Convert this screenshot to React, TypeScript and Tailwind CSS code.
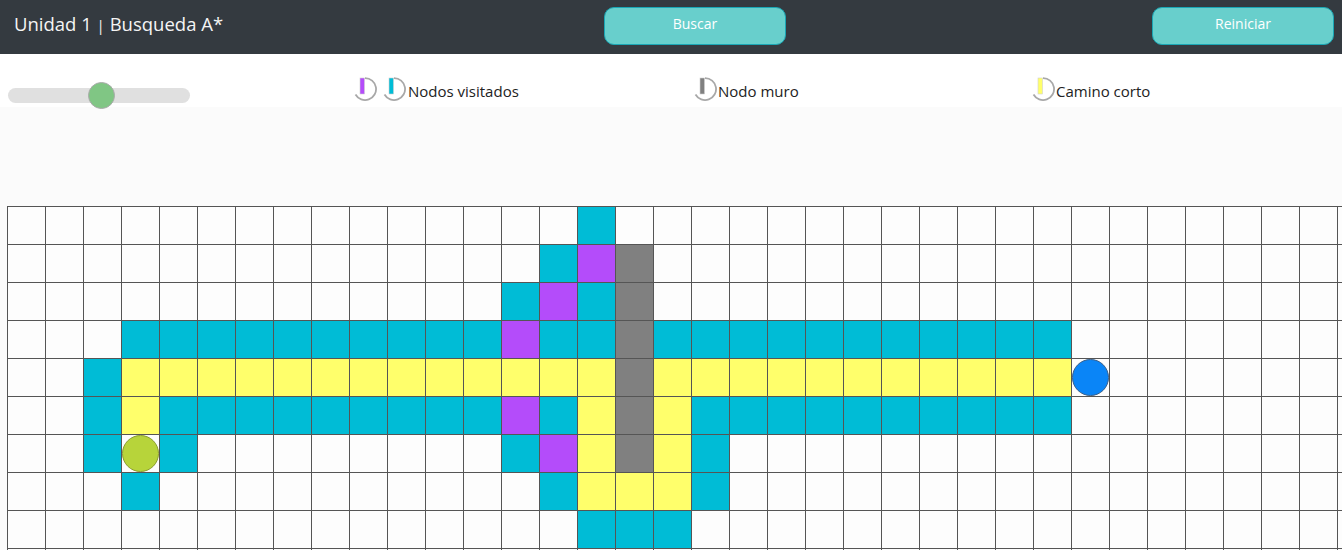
import React from 'react';

type Cell = '.' | 'c' | 'p' | 'w' | 'y' | 'S' | 'E';

const COLS = 36;
const ROWS = 10;

// [from, to, type] segments per row
const SEGMENTS: [number, number, Cell][][] = [
  [[15, 15, 'c']],
  [[14, 14, 'c'], [15, 15, 'p'], [16, 16, 'w']],
  [[13, 13, 'c'], [14, 14, 'p'], [15, 15, 'c'], [16, 16, 'w']],
  [[3, 12, 'c'], [13, 13, 'p'], [14, 15, 'c'], [16, 16, 'w'], [17, 27, 'c']],
  [[2, 2, 'c'], [3, 15, 'y'], [16, 16, 'w'], [17, 27, 'y'], [28, 28, 'E']],
  [[2, 2, 'c'], [3, 3, 'y'], [4, 12, 'c'], [13, 13, 'p'], [14, 14, 'c'], [15, 15, 'y'], [16, 16, 'w'], [17, 17, 'y'], [18, 27, 'c']],
  [[2, 2, 'c'], [3, 3, 'S'], [4, 4, 'c'], [13, 13, 'c'], [14, 14, 'p'], [15, 15, 'y'], [16, 16, 'w'], [17, 17, 'y'], [18, 18, 'c']],
  [[3, 3, 'c'], [14, 14, 'c'], [15, 17, 'y'], [18, 18, 'c']],
  [[15, 17, 'c']],
  [],
];

const buildGrid = (): Cell[][] =>
  SEGMENTS.slice(0, ROWS).map((segs) => {
    const row: Cell[] = Array(COLS).fill('.');
    segs.forEach(([a, b, t]) => {
      for (let i = a; i <= b; i++) row[i] = t;
    });
    return row;
  });

const CELL_BG: Record<Cell, string> = {
  '.': 'bg-[#fdfdfd]',
  c: 'bg-[#00bcd6]',
  p: 'bg-[#b44cfa]',
  w: 'bg-[#808080]',
  y: 'bg-[#ffff6b]',
  S: 'bg-[#fdfdfd]',
  E: 'bg-[#fdfdfd]',
};

const LegendGlyph: React.FC<{ color: string }> = ({ color }) => (
  <svg width="24" height="24" viewBox="0 0 24 24" className="shrink-0">
    <path d="M12 1.05 A11 11 0 1 1 2.5 17.5" fill="none" stroke="#a8a8a8" strokeWidth="1.8" />
    <rect x="7" y="1" width="4.5" height="16" fill={color} stroke="#d0d0d0" strokeWidth="0.6" />
  </svg>
);

export default function App() {
  const grid = buildGrid();
  return (
    <div className="w-[1342px] h-[550px] overflow-hidden bg-[#fbfbfb] font-['Open_Sans',sans-serif]">
      <header className="h-[54px] bg-[#343a40] flex items-start">
        <div className="w-[604px] pl-[14px] pt-[10px] text-[18.5px] text-[#f4f4f4]">
          Unidad 1 <span className="text-[15px]">|</span> Busqueda A*
        </div>
        <button className="mt-[7px] w-[182px] h-[38px] pb-[6px] rounded-[10px] bg-[#68cfcc] border border-[#1aa7b5] text-white text-[14px]">
          Buscar
        </button>
        <div className="flex-1" />
        <button className="mt-[7px] w-[182px] h-[38px] pb-[6px] mr-[8px] rounded-[10px] bg-[#68cfcc] border border-[#1aa7b5] text-white text-[14px]">
          Reiniciar
        </button>
      </header>

      <div className="h-[53px] bg-white flex items-start pt-[22px] text-[15px] text-[#222]">
        <div className="w-[353px] pl-[8px] pt-[12px]">
          <div className="relative w-[182px] h-[15px] rounded-full bg-[#e0e0e0]">
            <div className="absolute left-[80px] top-[-6px] w-[27px] h-[27px] rounded-full bg-[#80c684] border border-[#aaaaaa]" />
          </div>
        </div>
        <div className="w-[340px] flex items-center gap-[5px]">
          <LegendGlyph color="#b44cfa" />
          <LegendGlyph color="#00bcd6" />
          <span className="ml-[-3px] pt-[4px]">Nodos visitados</span>
        </div>
        <div className="w-[338px] flex items-center gap-[1px]">
          <LegendGlyph color="#808080" />
          <span className="pt-[4px]">Nodo muro</span>
        </div>
        <div className="flex items-center gap-[1px]">
          <LegendGlyph color="#ffff6b" />
          <span className="pt-[4px]">Camino corto</span>
        </div>
      </div>

      <div className="h-[99px]" />

      <div className="pl-[7px]">
        <div className="grid grid-cols-[repeat(36,38px)] w-max border-t border-l border-[#555]">
          {grid.map((row, r) =>
            row.map((cell, c) => (
              <div
                key={`${r}-${c}`}
                className={`w-[38px] h-[38px] border-r border-b border-[#555] flex items-center justify-center ${CELL_BG[cell]}`}
              >
                {cell === 'S' && <div className="w-[37px] h-[37px] rounded-full bg-[#b7d43a] border border-[#8a9c2e]" />}
                {cell === 'E' && <div className="w-[37px] h-[37px] rounded-full bg-[#0a85f7] border border-[#3a5f88]" />}
              </div>
            ))
          )}
        </div>
      </div>
    </div>
  );
}
